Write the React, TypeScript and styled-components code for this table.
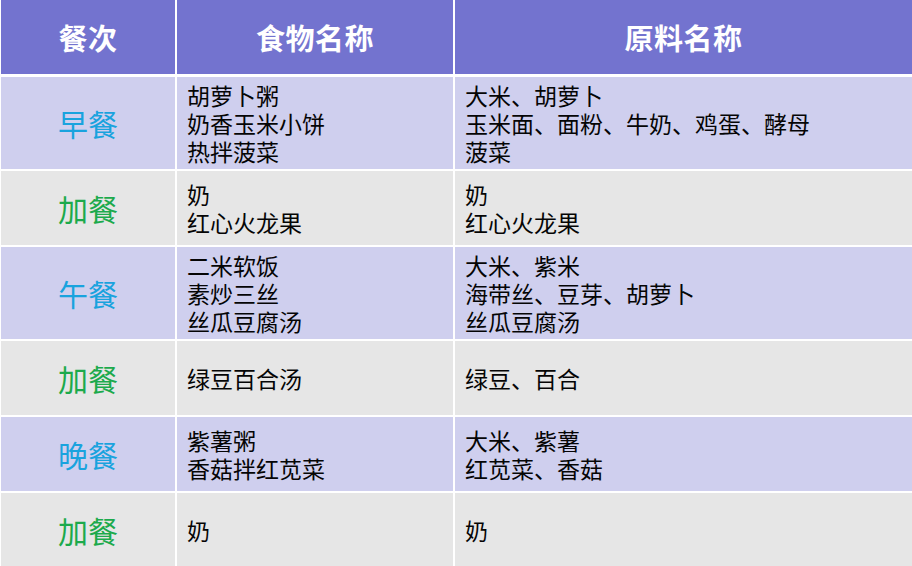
import * as React from 'react';
import styled, { createGlobalStyle } from 'styled-components';

const GlobalStyle = createGlobalStyle`
  html, body {
    margin: 0;
    padding: 0;
    background: #ffffff;
  }
  body {
    font-family: "Liberation Sans", "Noto Sans CJK SC", sans-serif;
  }
`;

type Meal = {
  name: string;
  kind: 'main' | 'extra';
  foods: string[];
  materials: string[];
};

const meals: Meal[] = [
  {
    name: '早餐',
    kind: 'main',
    foods: ['胡萝卜粥', '奶香玉米小饼', '热拌菠菜'],
    materials: ['大米、胡萝卜', '玉米面、面粉、牛奶、鸡蛋、酵母', '菠菜'],
  },
  {
    name: '加餐',
    kind: 'extra',
    foods: ['奶', '红心火龙果'],
    materials: ['奶', '红心火龙果'],
  },
  {
    name: '午餐',
    kind: 'main',
    foods: ['二米软饭', '素炒三丝', '丝瓜豆腐汤'],
    materials: ['大米、紫米', '海带丝、豆芽、胡萝卜', '丝瓜豆腐汤'],
  },
  {
    name: '加餐',
    kind: 'extra',
    foods: ['绿豆百合汤'],
    materials: ['绿豆、百合'],
  },
  {
    name: '晚餐',
    kind: 'main',
    foods: ['紫薯粥', '香菇拌红苋菜'],
    materials: ['大米、紫薯', '红苋菜、香菇'],
  },
  {
    name: '加餐',
    kind: 'extra',
    foods: ['奶'],
    materials: ['奶'],
  },
];

const Table = styled.div`
  display: flex;
  flex-direction: column;
  gap: 2px;
  width: 912px;
  padding-left: 1px;
  box-sizing: border-box;
  background: #ffffff;
`;

const Row = styled.div`
  display: grid;
  grid-template-columns: 174px 276px 1fr;
  column-gap: 2px;
`;

const HeaderRow = styled(Row)`
  height: 74px;
  margin-bottom: 1px;
`;

const HeadCell = styled.div`
  display: flex;
  align-items: center;
  justify-content: center;
  background: #7373cf;
  color: #ffffff;
  font-family: "Noto Sans CJK SC", sans-serif;
  font-size: 29px;
  font-weight: 700;
  letter-spacing: 0.5px;
`;

const BodyRow = styled(Row)<{ $stripe: boolean }>`
  min-height: 74px;

  > div {
    background: ${({ $stripe }) => ($stripe ? '#cfcfee' : '#e6e6e6')};
  }
`;

const MealCell = styled.div<{ $kind: 'main' | 'extra' }>`
  display: flex;
  align-items: center;
  justify-content: center;
  padding-bottom: 1px;
  font-family: "Noto Sans CJK SC", sans-serif;
  font-size: 30px;
  color: ${({ $kind }) => ($kind === 'main' ? '#19a3de' : '#1caa4c')};
`;

const TextCell = styled.div`
  display: flex;
  flex-direction: column;
  justify-content: center;
  padding: 6px 10px 2px;
  font-size: 23px;
  line-height: 28px;
  color: #050505;
`;

const Line = styled.div`
  white-space: nowrap;
`;

const App = () => (
  <>
    <GlobalStyle />
    <Table>
      <HeaderRow>
        <HeadCell>餐次</HeadCell>
        <HeadCell>食物名称</HeadCell>
        <HeadCell>原料名称</HeadCell>
      </HeaderRow>
      {meals.map((meal, i) => (
        <BodyRow key={i} $stripe={i % 2 === 0}>
          <MealCell $kind={meal.kind}>{meal.name}</MealCell>
          <TextCell>
            {meal.foods.map((f) => (
              <Line key={f}>{f}</Line>
            ))}
          </TextCell>
          <TextCell>
            {meal.materials.map((m) => (
              <Line key={m}>{m}</Line>
            ))}
          </TextCell>
        </BodyRow>
      ))}
    </Table>
  </>
);

export default App;
